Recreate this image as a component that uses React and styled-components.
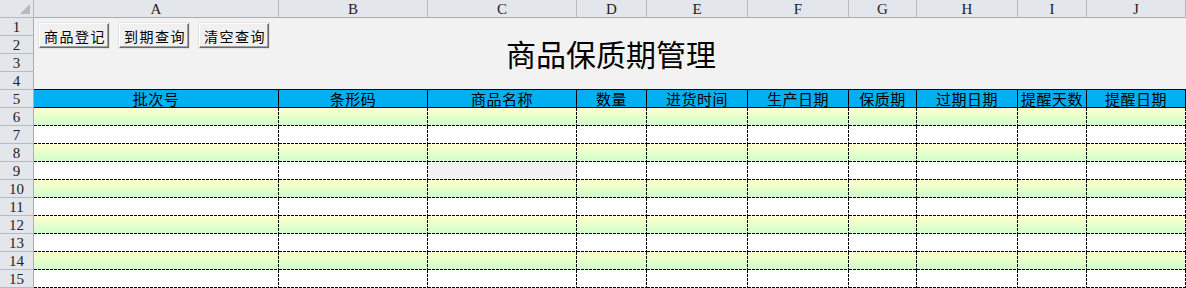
import styled, { createGlobalStyle } from "styled-components";

const COLUMNS = ["A", "B", "C", "D", "E", "F", "G", "H", "I", "J"];
const HEADERS = ["批次号", "条形码", "商品名称", "数量", "进货时间", "生产日期", "保质期", "过期日期", "提醒天数", "提醒日期"];
const BUTTONS = ["商品登记", "到期查询", "清空查询"];
const DATA_ROWS = [6, 7, 8, 9, 10, 11, 12, 13, 14, 15];

const GlobalStyle = createGlobalStyle`
  html, body {
    margin: 0;
    padding: 0;
    background: #ffffff;
    overflow: hidden;
  }
  body {
    font-family: "Noto Sans CJK SC", "Liberation Sans", sans-serif;
  }
`;

const App = () => {
  return (
    <>
      <GlobalStyle />
      <Sheet>
        <Corner />
        {COLUMNS.map((c) => (
          <ColHead key={c}>{c}</ColHead>
        ))}

        <Banner>
          <Buttons>
            {BUTTONS.map((b) => (
              <FormButton key={b}>{b}</FormButton>
            ))}
          </Buttons>
          <Title>商品保质期管理</Title>
        </Banner>
        {[1, 2, 3, 4].map((n) => (
          <RowHead key={n}>{n}</RowHead>
        ))}

        <RowHead>5</RowHead>
        {HEADERS.map((h) => (
          <HeadCell key={h}>{h}</HeadCell>
        ))}

        {DATA_ROWS.map((r) => (
          <Row key={r} r={r} />
        ))}
      </Sheet>
    </>
  );
};

const Row = ({ r }) => (
  <>
    <RowHead>{r}</RowHead>
    {COLUMNS.map((c) => (
      <Cell key={c} $striped={r % 2 === 0} $blank={r === 9 && c === "C"} />
    ))}
  </>
);

const Sheet = styled.div`
  display: grid;
  grid-template-columns: 34px 245px 149px 149px 70px 101px 101px 68px 101px 69px 1fr;
  grid-auto-rows: 18px;
  width: 1186px;
  height: 288px;
  overflow: hidden;
  background: #f2f2f2;
`;

const headBase = `
  box-sizing: border-box;
  background: #e3e6eb;
  color: #222;
  font-family: "Liberation Serif", "DejaVu Serif", serif;
  font-size: 15px;
  display: flex;
  align-items: center;
  justify-content: center;
`;

const Corner = styled.div`
  ${headBase}
  position: relative;
  border-right: 1px solid #b7bbc1;
  border-bottom: 1px solid #b7bbc1;
  &::after {
    content: "";
    position: absolute;
    right: 3px;
    bottom: 3px;
    border-style: solid;
    border-width: 0 0 10px 10px;
    border-color: transparent transparent #b5b9bf transparent;
  }
`;

const ColHead = styled.div`
  ${headBase}
  padding-top: 2px;
  border-right: 1px solid #b7bbc1;
  border-bottom: 1px solid #a9adb3;
`;

const RowHead = styled.div`
  ${headBase}
  grid-column: 1;
  padding-top: 1px;
  border-right: 1px solid #a9adb3;
  border-bottom: 1px solid #b7bbc1;
`;

const Banner = styled.div`
  grid-column: 2 / -1;
  grid-row: 2 / span 4;
  box-sizing: border-box;
  border-bottom: 1px solid #000;
  background: #f2f2f2;
  display: grid;
  & > * {
    grid-area: 1 / 1;
  }
`;

const Buttons = styled.div`
  display: flex;
  gap: 10px;
  align-self: start;
  justify-self: start;
  margin: 5px 0 0 5px;
`;

const FormButton = styled.button`
  box-sizing: border-box;
  width: 70px;
  height: 25px;
  padding: 0 0 0 2px;
  background: #f0f0f0;
  border: 1px solid;
  border-color: #ffffff #696969 #696969 #ffffff;
  box-shadow: inset -1px -1px 0 #a0a0a0, 0 0 0 1px #e3e3e3;
  font-family: "Noto Sans CJK SC", sans-serif;
  font-size: 14px;
  letter-spacing: 1.5px;
  line-height: 22px;
  color: #000;
`;

const Title = styled.div`
  align-self: start;
  justify-self: start;
  margin: 20px 0 0 472px;
  font-family: "Noto Sans CJK SC", sans-serif;
  font-size: 30px;
  line-height: 30px;
  color: #000;
`;

const HeadCell = styled.div`
  box-sizing: border-box;
  background: #00b0f0;
  border-right: 1px solid #000;
  border-bottom: 1px solid #000;
  display: flex;
  align-items: center;
  justify-content: center;
  font-family: "Noto Sans CJK SC", sans-serif;
  font-size: 15px;
  letter-spacing: 0.5px;
  line-height: 17px;
  color: #000;
  white-space: nowrap;
`;

const dashes = `
  repeating-linear-gradient(to right, #000 0 3px, transparent 3px 4px) left bottom / 100% 1px no-repeat,
  repeating-linear-gradient(to bottom, #000 0 3px, transparent 3px 4px) right top / 1px 100% no-repeat
`;

const Cell = styled.div`
  background: ${dashes},
    ${({ $striped, $blank }) =>
      $striped
        ? "linear-gradient(#ffffcc, #ccffcc)"
        : $blank
        ? "#f2f2f2"
        : "#ffffff"};
`;

export default App;
